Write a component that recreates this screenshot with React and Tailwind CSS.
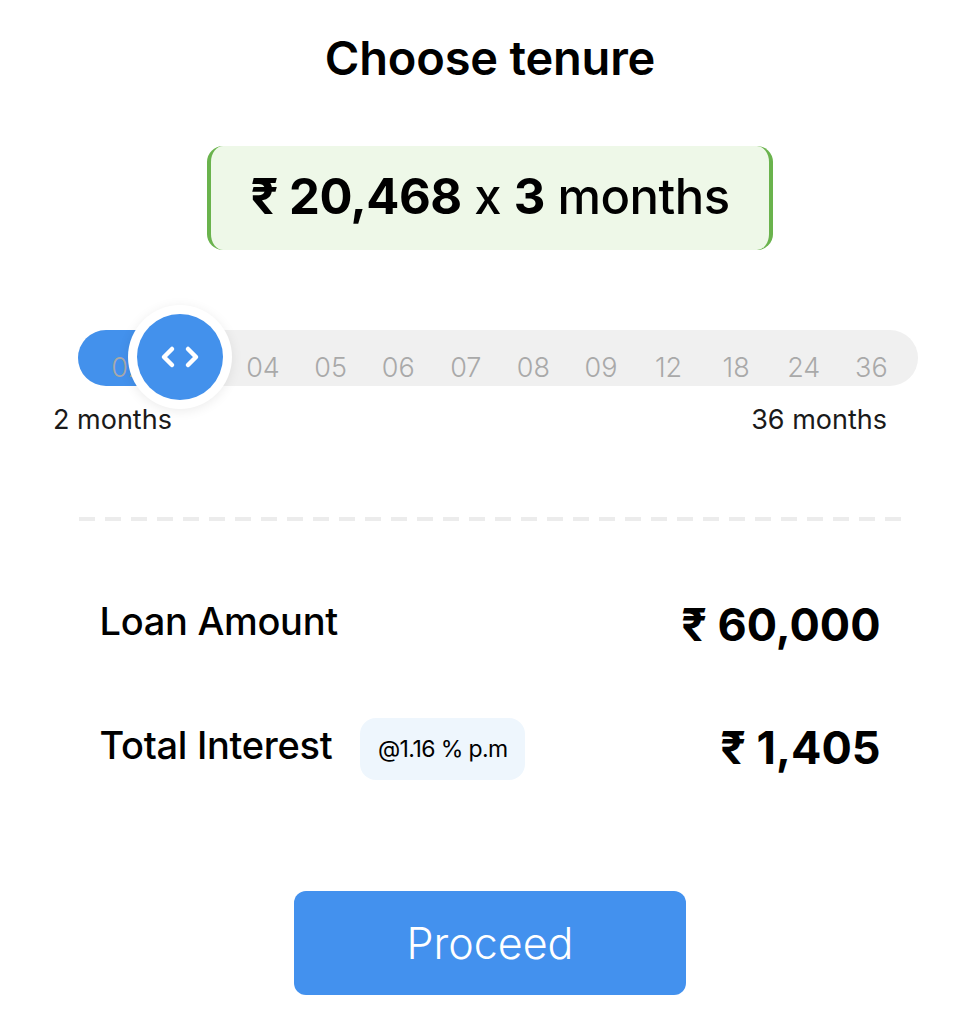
import React from "react";

const labels = ["02", "03", "04", "05", "06", "07", "08", "09", "12", "18", "24", "36"];

export default function App() {
  return (
    <div className="w-[980px] h-[1024px] bg-white flex flex-col items-center text-black" style={{ fontFamily: "Inter, 'Noto Sans', sans-serif" }}>
      <h1 className="mt-[29px] text-[47px] leading-[58px] font-semibold tracking-[-0.2px]">Choose tenure</h1>

      <div className="mt-[59px] w-[566px] h-[104px] rounded-2xl border-x-4 border-[#6ab34d] bg-[#eef8e8] flex items-center justify-center">
        <span className="text-[49px] leading-none tracking-[-0.5px] mt-[-4px]">
          <span className="font-bold">₹ 20,468</span>
          <span className="font-medium"> x </span>
          <span className="font-bold">3</span>
          <span className="font-medium"> months</span>
        </span>
      </div>

      <div className="mt-[80px] w-[840px] h-[56px] ml-[16px] relative rounded-full bg-[#f0f0f0]">
        <div className="absolute left-0 top-0 h-[56px] w-[110px] rounded-l-full bg-[#4391ec]"></div>
        <div className="relative h-full flex items-center pt-[20px] pl-[16px] text-[27px] leading-[32px] font-light text-[#a9a9a9]">
          {labels.map((l) => (
            <div key={l} className="w-[67.6px] shrink-0 text-center">{l}</div>
          ))}
        </div>
        <div className="absolute left-[50px] top-[-25px] w-[104px] h-[104px] rounded-full bg-white shadow-[0_2px_12px_rgba(0,0,0,0.08)] flex items-center justify-center">
          <div className="w-[86px] h-[86px] rounded-full bg-[#4391ec] flex items-center justify-center">
            <svg width="46" height="26" viewBox="0 0 46 26" fill="none" stroke="white" strokeWidth="4.5" strokeLinecap="round" strokeLinejoin="round">
              <path d="M15 5 L7 13 L15 21" />
              <path d="M31 5 L39 13 L31 21" />
            </svg>
          </div>
        </div>
      </div>

      <div className="mt-[18px] w-[834px] ml-[-40px] flex justify-between text-[27px] leading-[32px] font-normal text-[#1a1a1a]">
        <span>2 months</span>
        <span>36 months</span>
      </div>

      <div className="mt-[81px] ml-[4px] w-[826px] h-[4px] bg-[linear-gradient(to_right,#ececec_16px,transparent_16px)] bg-[length:26px_4px]"></div>

      <div className="mt-[69px] w-[781px] flex items-center justify-between">
        <span className="text-[38px] leading-[44px] font-medium tracking-[-0.3px]">Loan Amount</span>
        <span className="text-[45px] leading-[54px] font-bold mt-[8px]">₹ 60,000</span>
      </div>

      <div className="mt-[58px] w-[781px] flex items-center justify-between">
        <div className="flex items-center gap-[28px]">
          <span className="text-[38px] leading-[44px] font-medium tracking-[-0.3px]">Total Interest</span>
          <span className="h-[62px] w-[165px] rounded-2xl bg-[#eef6fd] flex items-center justify-center text-[23px] tracking-[-0.6px] mt-[8px]">@1.16 % p.m</span>
        </div>
        <span className="text-[45px] leading-[54px] font-bold mt-[6px]">₹ 1,405</span>
      </div>

      <button className="mt-[111px] w-[392px] h-[104px] rounded-xl bg-[#4391ee] text-white text-[43px] font-light flex items-center justify-center">
        Proceed
      </button>
    </div>
  );
}
